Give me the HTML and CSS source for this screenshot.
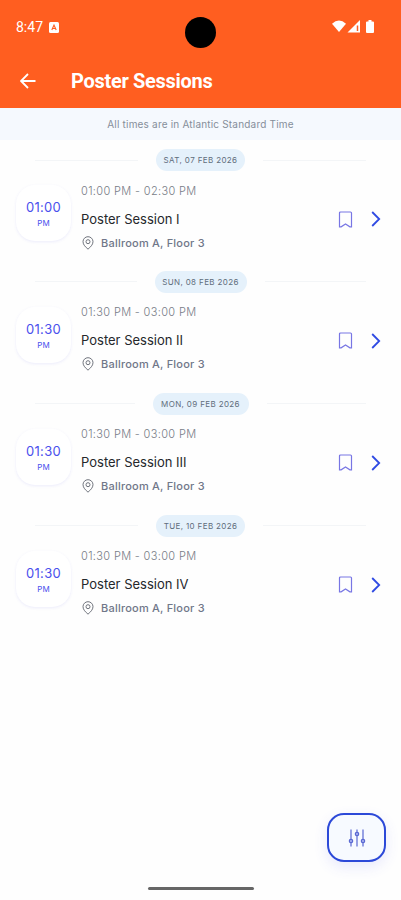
FILE: index.html
```
<!DOCTYPE html>
<html lang="en">
<head>
  <meta charset="utf-8">
  <meta name="viewport" content="width=device-width">
  <title>Poster Sessions</title>
  <link rel="stylesheet" href="styles.css">
</head>
<body>
  <svg class="sprite">
    <symbol id="pin" viewBox="0 0 12 14">
      <path d="M6 13.2C3.6 11 1 8.700 1 5.700a5 5 0 0 1 10 0C11 8.700 8.400 11 6 13.200z"/>
      <circle cx="6" cy="5.700" r="2"/>
    </symbol>
    <symbol id="bookmark" viewBox="0 0 15 17">
      <path d="M2.500 1h10q1 0 1 1v13.800h-1.600L7.500 13l-4.400 2.800H1.500V2q0-1 1-1z"/>
    </symbol>
    <symbol id="chevron" viewBox="0 0 10 16">
      <path d="M1.200 1l7 7-7 7"/>
    </symbol>
  </svg>

  <div class="header">
    <div class="statusbar">
      <span class="clock">8:47</span>
      <svg class="badge" width="10" height="11" viewBox="0 0 10 11">
        <rect width="10" height="11" rx="1.500" fill="#fff"/>
        <path d="M2.800 8L5 3l2.200 5M3.500 6.500h3" fill="none" stroke="#ff5e20" stroke-width="1.100"/>
      </svg>
      <span class="camera"></span>
      <svg class="signals" width="44" height="16" viewBox="0 0 44 16" fill="#fff">
        <path d="M0 4.800Q7 -1.600 14 4.800L7 13z"/>
        <path d="M28 1v12.500H15.500z"/>
        <path d="M25.500 6.500v5.500" stroke="#ff5e20" stroke-width="1.500"/>
        <path d="M36.500 1h3v1.500H41q1 0 1 1V13q0 1-1 1h-6q-1 0-1-1V3.500q0-1 1-1h1.500z"/>
      </svg>
    </div>
    <div class="toolbar">
      <svg class="back" width="16" height="16" viewBox="0 0 16 16">
        <path d="M15.500 8H1.500M8 1L1 8l7 7"/>
      </svg>
      <h1>Poster Sessions</h1>
    </div>
  </div>

  <div class="notice"><span>All times are in Atlantic Standard Time</span></div>

  <div class="sessions">
    <div class="day">
      <div class="date"><span class="pill sat">SAT, 07 FEB 2026</span></div>
      <div class="session">
        <div class="start"><span class="hour">01:00</span><span class="ampm">PM</span></div>
        <div class="info">
          <div class="range">01:00 PM - 02:30 PM</div>
          <div class="title">Poster Session I</div>
          <div class="place"><svg><use href="#pin"/></svg><span>Ballroom A, Floor 3</span></div>
        </div>
        <svg class="bookmark"><use href="#bookmark"/></svg>
        <svg class="chevron"><use href="#chevron"/></svg>
      </div>
    </div>

    <div class="day">
      <div class="date"><span class="pill sun">SUN, 08 FEB 2026</span></div>
      <div class="session">
        <div class="start"><span class="hour">01:30</span><span class="ampm">PM</span></div>
        <div class="info">
          <div class="range">01:30 PM - 03:00 PM</div>
          <div class="title">Poster Session II</div>
          <div class="place"><svg><use href="#pin"/></svg><span>Ballroom A, Floor 3</span></div>
        </div>
        <svg class="bookmark"><use href="#bookmark"/></svg>
        <svg class="chevron"><use href="#chevron"/></svg>
      </div>
    </div>

    <div class="day">
      <div class="date"><span class="pill mon">MON, 09 FEB 2026</span></div>
      <div class="session">
        <div class="start"><span class="hour">01:30</span><span class="ampm">PM</span></div>
        <div class="info">
          <div class="range">01:30 PM - 03:00 PM</div>
          <div class="title">Poster Session III</div>
          <div class="place"><svg><use href="#pin"/></svg><span>Ballroom A, Floor 3</span></div>
        </div>
        <svg class="bookmark"><use href="#bookmark"/></svg>
        <svg class="chevron"><use href="#chevron"/></svg>
      </div>
    </div>

    <div class="day">
      <div class="date"><span class="pill tue">TUE, 10 FEB 2026</span></div>
      <div class="session">
        <div class="start"><span class="hour">01:30</span><span class="ampm">PM</span></div>
        <div class="info">
          <div class="range">01:30 PM - 03:00 PM</div>
          <div class="title">Poster Session IV</div>
          <div class="place"><svg><use href="#pin"/></svg><span>Ballroom A, Floor 3</span></div>
        </div>
        <svg class="bookmark"><use href="#bookmark"/></svg>
        <svg class="chevron"><use href="#chevron"/></svg>
      </div>
    </div>
  </div>

  <div class="filter">
    <svg width="18" height="20" viewBox="0 0 18 20">
      <path d="M3 1.500V11M3 15v3.500M9 1.500V4M9 8v10.500M15 1.500V11M15 15v3.500"/>
      <circle cx="3" cy="13" r="1.700"/>
      <circle cx="9" cy="6" r="1.700"/>
      <circle cx="15" cy="13" r="1.700"/>
    </svg>
  </div>
  <div class="homebar"></div>
</body>
</html>
```
FILE: styles.css
```
* {
  box-sizing: border-box;
}

body {
  margin: 0;
  height: 900px;
  background: #fefefe;
  font-family: Inter, "Open Sans", sans-serif;
  display: flex;
  flex-direction: column;
  overflow: hidden;
}

.sprite {
  display: none;
}

.header {
  height: 108px;
  background: #ff5e20;
  color: #fff;
  font-family: Roboto, sans-serif;
}

.statusbar {
  height: 54px;
  padding: 0 25px 0 16px;
  display: flex;
  align-items: center;
}

.clock {
  font-size: 14px;
  width: 27px;
}

.badge {
  margin-left: 6px;
}

.camera {
  width: 31px;
  height: 31px;
  margin: 11px 0 0 126px;
  border-radius: 50%;
  background: #000;
}

.signals {
  margin-left: auto;
}

.toolbar {
  height: 54px;
  padding-left: 20px;
  display: flex;
  align-items: center;
}

.back {
  fill: none;
  stroke: #fff;
  stroke-width: 1.8;
}

h1 {
  margin: 0 0 0 35px;
  font-size: 20px;
  font-weight: 700;
  letter-spacing: -0.3px;
}

.notice {
  height: 32px;
  background: #f5f9fe;
  color: #858e9a;
  font-size: 10px;
  letter-spacing: 0.19px;
  display: flex;
  align-items: center;
  justify-content: center;
}

.day {
  height: 121.9px;
  padding-top: 9px;
}

.date {
  height: 22px;
  margin: 0 35px;
  display: flex;
  align-items: center;
  gap: 18px;
}

.date:before, .date:after {
  content: "";
  flex: 1;
  height: 1px;
  background: #f3f5f7;
}

.pill {
  height: 22px;
  border-radius: 11px;
  background: #e5f1fb;
  color: #5f6d7c;
  font-size: 8px;
  line-height: 22px;
  letter-spacing: 0.37px;
  text-align: center;
  white-space: nowrap;
}

.sat, .tue {
  width: 89px;
}

.sun {
  width: 92px;
}

.mon {
  width: 96px;
}

.session {
  height: 85px;
  padding: 0 20px 0 16px;
  display: flex;
  align-items: center;
}

.start {
  width: 55px;
  height: 56px;
  margin-bottom: 1px;
  border-radius: 19px;
  background: #fff;
  box-shadow: 0 1px 3px rgba(75, 75, 230, 0.1);
  color: #4a50ed;
  display: flex;
  flex-direction: column;
  align-items: center;
}

.hour {
  margin-top: 13px;
  font-size: 13px;
  line-height: 18px;
  letter-spacing: 0.3px;
}

.ampm {
  font-size: 8px;
  line-height: 14px;
}

.info {
  width: 240px;
  margin-left: 10px;
  padding-top: 10px;
}

.range {
  height: 20px;
  line-height: 20px;
  font-size: 11px;
  font-weight: 300;
  letter-spacing: 0.35px;
  color: #777c86;
}

.title {
  height: 35px;
  line-height: 36px;
  font-size: 13px;
  color: #25272b;
}

.place {
  height: 14px;
  margin-bottom: 7px;
  padding-left: 1px;
  display: flex;
  align-items: center;
  font-size: 11px;
  font-weight: 500;
  letter-spacing: 0.22px;
  color: #707789;
}

.place svg {
  width: 12px;
  height: 14px;
  margin-right: 7px;
  fill: none;
  stroke: #70747d;
}

.bookmark {
  width: 15px;
  height: 17px;
  margin: 11px 0 0 17px;
  fill: none;
  stroke: #7876e4;
  stroke-width: 1.2;
}

.chevron {
  width: 10px;
  height: 16px;
  margin: 11px 0 0 auto;
  fill: none;
  stroke: #304be3;
  stroke-width: 1.8;
}

/* floating over the list */
.filter {
  position: absolute;
  right: 15px;
  bottom: 38px;
  width: 59px;
  height: 49px;
  border: 2px solid #2c49d8;
  border-radius: 17px;
  background: #f7faff;
  box-shadow: 0 5px 14px rgba(70, 80, 240, 0.12);
  display: flex;
  align-items: center;
  justify-content: center;
}

.filter svg {
  fill: #aab2ef;
  stroke: #5968d2;
  stroke-width: 1.2;
}

.homebar {
  width: 106px;
  height: 3px;
  margin: auto auto 10px;
  border-radius: 2px;
  background: #666;
}
```
